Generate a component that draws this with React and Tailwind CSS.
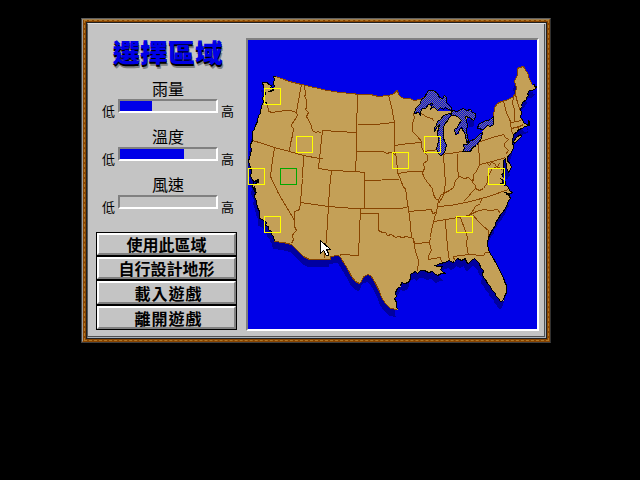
import React from "react";

const NORTH =
  "275,76 281,78 289,81 301,84 314,87 327,90 340,92 360,94 370,94 378,96 388,95 394,93 395,91 397,90 398,94 401,97 404,98 410,98 413,100 420,99 424,97";
const LAKES_SIDE = "428,104 437,110 452,110 457,116 466,117 466,131 467,144 480,136 483,127 493,118";
const NORTHEAST =
  "493,116 494,107 497,103 501,101 505,100 512,97 515,93 516,87 515,84 514,81 517,74 517,69 518,67 520,67 522,66 524,67 525,70 527,72 529,79 532,84";
const ATLANTIC =
  "532,84 534,84 534,86 536,86 535,88 532,90 529,90 527,93 528,95 526,97 526,99 522,102 521,106 520,109 521,112 520,117 522,119 523,122 526,124 528,124 529,121 528,120 529,125 524,126 522,128 518,129 517,131 513,134 512,141 513,147 511,152 508,155 507,157 507,161 509,162 511,167 508,172 506,167 505,158 503,160 503,165 503,170 504,176 505,184 508,187 509,190 512,192 508,194 510,198 508,200 507,204 503,211 500,214 498,218 495,222 495,225 492,229 490,233 488,237 487,242 488,250 491,255 493,258 495,262 498,267 500,272 503,277 504,281 506,285 506,292 504,296 503,300 500,301 498,298 495,295 495,293 491,289 490,286 487,283 485,279 483,277 482,274 483,270 480,267 479,263 477,261 474,258 471,260 468,263 466,262 465,258 461,260 457,258 454,261 452,262 449,260 444,262 440,263 435,265 437,266 442,266 440,269 442,271 445,273 441,273 437,275 434,273 432,271 428,272 424,270 420,270 417,273 415,271 410,274 410,278 408,282 404,283 401,282 400,286 397,288 395,292 396,296 394,298 396,302 396,306 397,309";
const MEXICO =
  "397,309 390,308 385,303 381,297 379,291 375,283 371,276 368,274 363,276 361,281 359,283 355,281 351,276 348,270 345,265 340,257 338,255 330,256 330,259 309,259 303,256 297,250 291,244 283,242 274,241";
const PACIFIC =
  "274,241 273,236 271,234 271,231 268,229 268,226 265,225 266,222 262,219 259,218 259,211 257,207 256,201 254,196 255,192 252,186 253,181 250,176 251,171 250,167 248,161 249,157 251,150 250,144 252,140 252,131 254,129 255,125 257,121 258,115 260,113 261,105 263,102 262,97 265,94 264,89 263,86 262,82 267,82 268,84 271,85 270,88 273,87 274,86 273,82 274,79 273,76 275,76";
const LAND = [NORTH, LAKES_SIDE, NORTHEAST, ATLANTIC, MEXICO, PACIFIC].join(" ");

const LAKES = [
  "414,113 415,108 420,103 421,99 424,97 426,93 428,90 433,90 437,93 439,97 442,98 444,95 446,97 446,102 451,107 451,110 448,109 445,107 443,109 440,107 437,110 434,107 433,106 430,109 432,103 428,104 425,108 422,108 420,111 420,115 418,112",
  "449,113 446,114 443,115 440,119 437,121 436,125 434,127 434,131 437,126 439,124 437,132 438,141 436,148 438,153 440,155 443,154 445,149 446,144 444,141 443,137 443,127 445,122 447,121 448,118 452,114",
  "452,110 457,111 460,109 463,108 466,110 470,109 472,112 475,113 475,117 473,120 469,117 465,116 466,121 467,124 466,131 468,141 466,142 465,134 463,131 461,127 459,129 458,133 455,134 454,129 457,127 458,124 461,120 459,118 457,116 450,114",
  "462,151 464,148 463,144 467,144 470,140 474,139 479,134 482,132 481,138 478,142 476,145 472,147 470,151",
  "478,124 483,121 490,119 493,116 493,124 490,126 487,125 483,129 477,128",
];

const STATE_LINES = [
  "267,104 268,111 272,112 277,111 286,110 290,110 296,112",
  "301,84 298,100 296,112 297,115 294,120 291,124 291,126 293,128 292,135 290,143 289,151",
  "252,140 262,143 274,147 289,151 303,155 319,158",
  "304,85 305,94 304,96 306,99 306,107 305,109 308,112 306,116 310,123 312,130 315,132 318,131 321,133",
  "322,158 319,158 322,130 354,132 357,133",
  "319,158 318,168 331,170 354,171 364,172 364,208",
  "274,147 272,160 270,176 278,193 294,220 294,226 296,230 293,233 292,235 293,239 291,243",
  "303,155 302,178 300,202 299,209 297,210 294,211 294,220",
  "300,202 328,206 354,208 375,208 401,208 408,206",
  "331,170 329,188 328,206 326,238 324,258",
  "357,94 356,133 356,151 355,171",
  "360,208 358,255 340,254 339,257",
  "360,213 378,213 378,230 382,232 385,232 387,235 391,234 395,237 398,236 402,237 406,236 413,238",
  "357,124 375,124 384,123 394,122",
  "356,151 383,151 386,153 390,152 395,154",
  "388,95 391,106 393,117 394,122 394,151 396,157 397,172 400,179 403,187 405,188 407,203 408,208 410,224 411,238",
  "364,180 399,179",
  "394,145 408,143 422,142",
  "397,173 410,171 423,171",
  "413,113 414,117 412,123 412,131 417,136 421,141 421,147 424,152 427,155 427,160 423,163 424,168 422,172 423,176 427,182 432,188 433,194 435,198 438,200 437,206 436,212 434,217 433,222 431,229 430,237 429,243 431,250 428,255 428,259 434,258 440,257 441,262",
  "423,151 430,150 440,149",
  "421,113 427,117 432,118 433,121",
  "408,211 420,210 431,209 432,213 436,212",
  "413,238 414,243 429,242",
  "413,238 414,247 416,254 418,260 417,271",
  "443,155 445,183 443,195 438,203",
  "437,206 450,205 470,201 488,196 508,189",
  "433,221 440,220 457,217 468,215 476,211 483,209 490,210 497,209 500,213",
  "445,220 446,236 448,255 449,260",
  "460,217 464,228 467,237 466,243 468,255",
  "454,260 453,256 468,254 483,255 485,252 488,252",
  "473,215 477,220 483,226 488,230 488,235",
  "468,215 472,211 475,206 480,203 481,199",
  "457,153 457,165 458,177",
  "440,154 450,153 462,151",
  "438,200 440,195 445,192 449,190 453,187 455,180 459,176 464,178 468,177 471,180 473,179 473,174 476,171 479,164 478,141",
  "473,179 472,182 475,185 475,188 471,192 468,196 463,201",
  "475,188 479,190 483,188 487,182 487,177 492,168 497,166 499,163",
  "479,164 492,161 505,157",
  "487,163 489,165 491,162 494,163 496,166 500,168 502,170",
  "480,141 492,137 503,134 505,137 508,139 504,143 504,146 508,150 505,154",
  "503,101 506,112 510,121 511,131 513,134",
  "513,97 512,103 514,109 514,121",
  "515,94 517,102 520,111",
  "510,122 517,121 522,119",
  "511,128 519,126 523,124",
  "518,126 518,130",
];

const INLETS = [
  "268,91 272,90 273,88 273,90 270,91",
  "265,102 267,103",
  "252,180 254,181 256,180 258,179 258,182 256,181 256,183 254,183",
  "503,180 501,179 503,182 501,183 505,185",
  "503,173 501,174 503,177",
  "504,192 508,193 506,194",
  "254,186 255,190 256,193",
];

const MARKERS = [
  [264, 88], [296, 136], [248, 168], [264, 216],
  [392, 152], [424, 136], [488, 168], [456, 216],
];

function RegionMap() {
  return (
    <svg
      className="block h-[289px] w-[289px] bg-[#0000e8]"
      viewBox="248 40 289 289"
      shapeRendering="crispEdges"
      fill="none"
    >
      <defs>
        <pattern
          id="water"
          width="2"
          height="2"
          patternUnits="userSpaceOnUse"
          patternTransform="translate(-.5 -.5)"
        >
          <rect width="2" height="2" fill="#0000e8" />
          <rect width="1" height="1" fill="#808080" />
          <rect x="1" y="1" width="1" height="1" fill="#808080" />
        </pattern>
      </defs>
      <g transform="translate(-1 8)">
        <polygon points={LAND} fill="#0000a0" />
      </g>
      <g transform="translate(.5 .5)">
        <polygon points={LAND} fill="#c4a057" />
        <polygon points="467,119 475,121 483,128 480,134 472,139 468,142" fill="#0000e8" />
        <polygon points="467,119 474,119 473,126 469,127" fill="#0000a0" />
        {STATE_LINES.map((p) => (
          <polyline key={p} points={p} stroke="#884400" />
        ))}
        <polyline points={NORTH} stroke="#884400" />
        <polyline points={NORTHEAST} stroke="#884400" />
        <polyline points={MEXICO} stroke="#884400" />
        <polyline points={ATLANTIC} stroke="#000" />
        <polyline points={PACIFIC} stroke="#000" />
        <polygon points="513,141 516,137 520,134 521,136 517,140 514,143" fill="#c4a057" stroke="#000" />
        {LAKES.map((p) => (
          <polygon key={p} points={p} fill="url(#water)" stroke="#000" />
        ))}
        {INLETS.map((p) => (
          <polyline key={p} points={p} stroke="#000" fill="#0000a0" />
        ))}
        {MARKERS.map(([x, y]) => (
          <rect key={`${x}-${y}`} x={x} y={y} width="16" height="16" stroke="#ffff00" />
        ))}
        <rect x="280" y="168" width="16" height="16" stroke="#00a800" />
        <path
          d="M320 240V253L323 250L326 255H328V253L326 249H330Z"
          fill="#fff"
          stroke="#000"
        />
      </g>
    </svg>
  );
}

function Gauge({ label, value }) {
  return (
    <div className="h-12">
      <div className="h-[18px] text-center text-[16px] leading-[14px]">{label}</div>
      <div className="flex">
        <span className="w-4 pt-[5px] text-[13px] leading-[14px]">低</span>
        <div className="h-[14px] w-[100px] border-2 border-t-[#808080] border-r-white border-b-white border-l-[#808080]">
          <div className="h-full bg-[#0000e8]" style={{ width: value }} />
        </div>
        <span className="w-4 pt-[5px] pl-[3px] text-[13px] leading-[14px]">高</span>
      </div>
    </div>
  );
}

function MenuButton({ children, tall, wide }) {
  return (
    <button
      className={`block w-full border border-black ${tall ? "h-[25px]" : "h-6"}`}
    >
      <span className="flex h-full items-center justify-center border-2 border-t-white border-r-[#808080] border-b-[#808080] border-l-white">
        <span
          className={`font-bold leading-[18px] ${
            wide ? "pl-[4px] text-[16px] tracking-[1px]" : "text-[16px]"
          }`}
        >
          {children}
        </span>
      </span>
    </button>
  );
}

export default function App() {
  return (
    <div className="h-[480px] w-[640px] overflow-hidden bg-black pt-[18px] pl-[81px] font-['Noto_Sans_CJK_TC',sans-serif] text-black">
      <div className="h-[325px] w-[470px] border border-t-[#606060] border-r-[#303030] border-b-[#404040] border-l-[#404040]">
        <div className="h-full border border-t-[#a08050] border-r-[#884400] border-b-[#884400] border-l-[#a0a0a0] bg-[#884400] pt-0 pr-0 pb-0 pl-px">
          <div className="h-full border border-dashed border-[#b07828] p-px">
            <div className="h-full border border-[#202020]">
              <div className="h-full border border-t-[#e0e0e0] border-r-[#a8b0b8] border-b-[#a8b0b8] border-l-[#585858]">
                <div className="flex h-full border-r border-b border-[#505050] bg-[#c4c4c4]">
                  <div className="w-[158px] shrink-0 pl-2">
                    <h1 className="h-[57px] w-[143px] pt-[14px] text-center">
                      <span className="-mt-[3px] block origin-center scale-y-92 text-[27.5px] leading-[32px] font-black text-[#0000e8] [text-shadow:0_2px_0_#000,1px_4px_0_#808080]">
                        選擇區域
                      </span>
                    </h1>
                    <div className="w-[138px] pl-[6px]">
                      <Gauge label="雨量" value="32px" />
                      <Gauge label="溫度" value="64px" />
                      <Gauge label="風速" value="0px" />
                    </div>
                    <div className="mt-[7px] w-[141px]">
                      <MenuButton>使用此區域</MenuButton>
                      <MenuButton>自行設計地形</MenuButton>
                      <MenuButton tall wide>載入遊戲</MenuButton>
                      <MenuButton tall wide>離開遊戲</MenuButton>
                    </div>
                  </div>
                  <div className="mt-[14px] h-[293px] w-[293px] shrink-0 border-2 border-t-[#808080] border-r-white border-b-white border-l-[#808080]">
                    <RegionMap />
                  </div>
                </div>
              </div>
            </div>
          </div>
        </div>
      </div>
    </div>
  );
}
